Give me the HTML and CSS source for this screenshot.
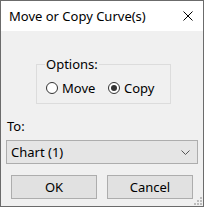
FILE: index.html
```html
<!DOCTYPE html>
<html>
<head>
<meta charset="utf-8">
<link rel="stylesheet" href="styles.css">
</head>
<body>
<div class="window">
  <div class="titlebar">
    <span class="title">Move or Copy Curve(s)</span>
    <svg class="close" width="10" height="10" viewBox="0 0 10 10"><path d="M0.5 0.5L9.5 9.5M9.5 0.5L0.5 9.5" stroke="#000" stroke-width="1" fill="none"/></svg>
  </div>
  <div class="content">
    <fieldset class="group">
      <legend>Options:</legend>
      <div class="radios">
        <label class="radio"><span class="circle"></span>Move</label>
        <label class="radio"><span class="circle checked"></span>Copy</label>
      </div>
    </fieldset>
    <div class="to">To:</div>
    <div class="select">
      <span>Chart (1)</span>
      <svg class="chev" width="9" height="5" viewBox="0 0 9 5"><path d="M0.5 0.5L4.5 4.5L8.5 0.5" stroke="#555" fill="none"/></svg>
    </div>
    <div class="buttons">
      <div class="btn">OK</div>
      <div class="btn">Cancel</div>
    </div>
  </div>
  <svg class="grip" width="8" height="8" viewBox="0 0 8 8">
    <rect x="6" y="0" width="2" height="2" fill="#bcbcbc"/>
    <rect x="3" y="3" width="2" height="2" fill="#bcbcbc"/>
    <rect x="6" y="3" width="2" height="2" fill="#bcbcbc"/>
    <rect x="0" y="6" width="2" height="2" fill="#bcbcbc"/>
    <rect x="3" y="6" width="2" height="2" fill="#bcbcbc"/>
    <rect x="6" y="6" width="2" height="2" fill="#bcbcbc"/>
  </svg>
</div>
</body>
</html>
```
FILE: styles.css
```css
html, body { margin: 0; padding: 0; }
body { font-family: "Noto Sans", "Open Sans", sans-serif; font-size: 13px; color: #000; }
.window {
  width: 202px; height: 205px;
  border: 1px solid #6b6b6b;
  background: #f0f0f0;
  position: relative;
  overflow: hidden;
}
.titlebar {
  height: 30px; background: #fff;
  display: flex; align-items: center; justify-content: space-between;
  padding: 0 10px 0 8px;
}
.title { line-height: 16px; margin-top: -1px; }
.content { padding: 0 5px; }
.group {
  margin: 26px 0 0 30px;
  width: 132px; height: 47px; box-sizing: border-box;
  border: 1px solid #dcdcdc;
  padding: 0 0 0 9px;
}
.group legend { padding: 0 1px; margin-left: -1px; line-height: 14px; }
.radios { display: flex; margin-top: 8px; line-height: 18px; }
.radio { display: flex; align-items: center; width: 62px; }
.circle {
  width: 10px; height: 10px; border: 1px solid #333; border-radius: 50%;
  background: #fff; margin-right: 4px; position: relative; box-sizing: content-box;
}
.circle.checked::after {
  content: ""; position: absolute; left: 2px; top: 2px; width: 6px; height: 6px; border-radius: 50%; background: #333;
}
.to { margin-top: 14px; margin-left: 1px; line-height: 16px; }
.select {
  margin-top: 6px; height: 24px; box-sizing: border-box;
  border: 1px solid #adadad; background: #e5e5e5;
  display: flex; align-items: center; justify-content: space-between;
  padding: 0 7px 0 4px;
}
.buttons { display: flex; gap: 10px; margin: 11px 0 0 5px; }
.btn {
  width: 86px; height: 24px; box-sizing: border-box;
  border: 1px solid #adadad; background: #e1e1e1;
  display: flex; align-items: center; justify-content: center;
}
.grip { position: absolute; right: 1px; bottom: 1px; }
```
